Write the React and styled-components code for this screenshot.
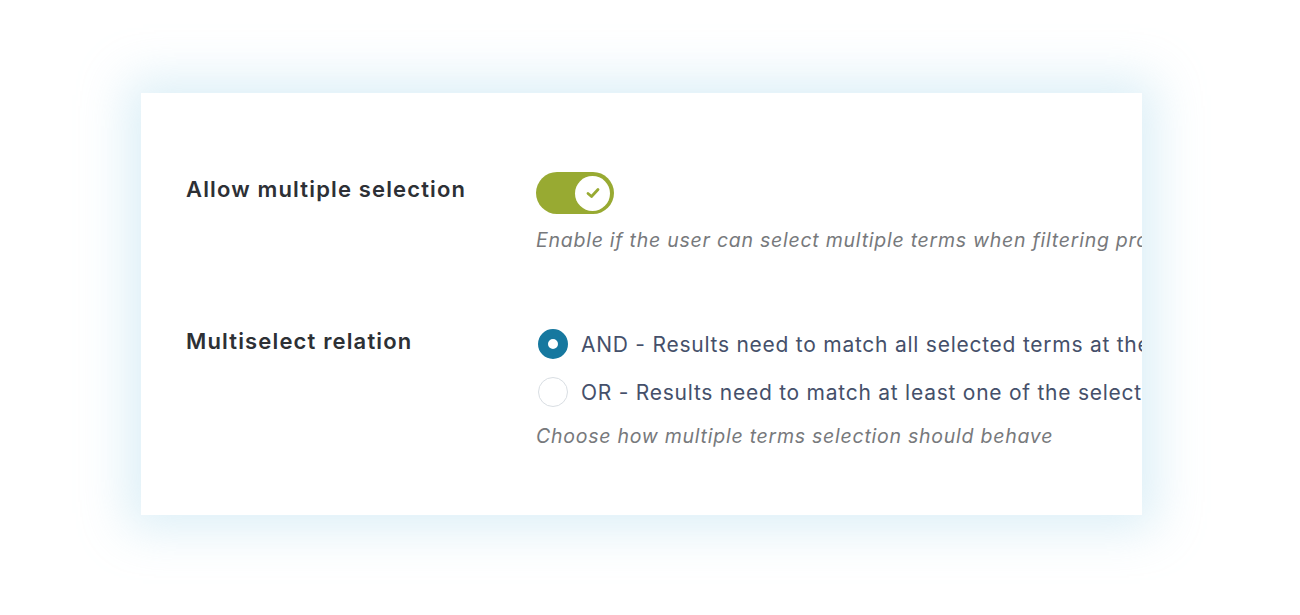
import React from "react";
import styled, { createGlobalStyle } from "styled-components";

const Global = createGlobalStyle`
  html, body { margin: 0; padding: 0; background: #ffffff; }
  body { font-family: Inter, "Noto Sans", "Liberation Sans", sans-serif; -webkit-font-smoothing: antialiased; }
`;

const Page = styled.div`
  width: 1300px;
  height: 615px;
  box-sizing: border-box;
  padding: 93px 0 0 141px;
  background: #ffffff;
`;

const Card = styled.div`
  width: 1001px;
  height: 422px;
  box-sizing: border-box;
  background: #ffffff;
  overflow: hidden;
  padding: 79px 0 0 45px;
  box-shadow: 0 0 45px 14px rgba(172, 216, 236, 0.42);
  display: flex;
  flex-direction: column;
  gap: 77px;
`;

const Row = styled.div`
  display: grid;
  grid-template-columns: 350px 1fr;
  align-items: start;
`;

const Label = styled.div`
  font-size: 22px;
  font-weight: 600;
  letter-spacing: 1.15px;
  color: #2d3035;
  line-height: 24px;
  padding-top: ${(p) => p.$offset || 0}px;
  white-space: nowrap;
`;

const Control = styled.div`
  display: flex;
  flex-direction: column;
  align-items: flex-start;
  min-width: 0;
`;

const Toggle = styled.div`
  width: 78px;
  height: 42px;
  border-radius: 21px;
  background: #98aa32;
  display: flex;
  align-items: center;
  justify-content: flex-end;
  padding: 0 4px;
  box-sizing: border-box;
`;

const Knob = styled.div`
  width: 35px;
  height: 35px;
  border-radius: 50%;
  background: #ffffff;
  display: flex;
  align-items: center;
  justify-content: center;
`;

const Description = styled.div`
  margin-top: ${(p) => p.$mt}px;
  font-size: 19.5px;
  letter-spacing: 0.75px;
  font-style: italic;
  color: #77797c;
  line-height: 24px;
  white-space: nowrap;
`;

const Options = styled.div`
  display: flex;
  flex-direction: column;
  gap: 18px;
`;

const Option = styled.label`
  display: flex;
  align-items: center;
  gap: 13px;
  height: 30px;
  font-size: 21px;
  letter-spacing: 0.75px;
  color: #45506a;
  white-space: nowrap;
`;

const Radio = styled.span`
  width: 30px;
  height: 30px;
  box-sizing: border-box;
  border-radius: 50%;
  flex: none;
  margin-left: 2px;
  background: #ffffff;
  border: ${(p) => (p.$checked ? "10px solid #16789f" : "1.5px solid #d9dee3")};
`;

export default function App() {
  return (
    <>
      <Global />
      <Page>
        <Card>
          <Row>
            <Label $offset={5}>Allow multiple selection</Label>
            <Control>
              <Toggle>
                <Knob>
                  <svg width="14" height="12" viewBox="0 0 14 12">
                    <path d="M2 6.5 L5.5 9.5 L12 2.5" fill="none" stroke="#98aa32" strokeWidth="2.8" strokeLinecap="round" strokeLinejoin="round" />
                  </svg>
                </Knob>
              </Toggle>
              <Description $mt={14}>
                Enable if the user can select multiple terms when filtering products
              </Description>
            </Control>
          </Row>
          <Row>
            <Label>Multiselect relation</Label>
            <Control>
              <Options>
                <Option>
                  <Radio $checked />
                  AND - Results need to match all selected terms at the same time
                </Option>
                <Option>
                  <Radio />
                  OR - Results need to match at least one of the selected terms
                </Option>
              </Options>
              <Description $mt={17}>Choose how multiple terms selection should behave</Description>
            </Control>
          </Row>
        </Card>
      </Page>
    </>
  );
}
